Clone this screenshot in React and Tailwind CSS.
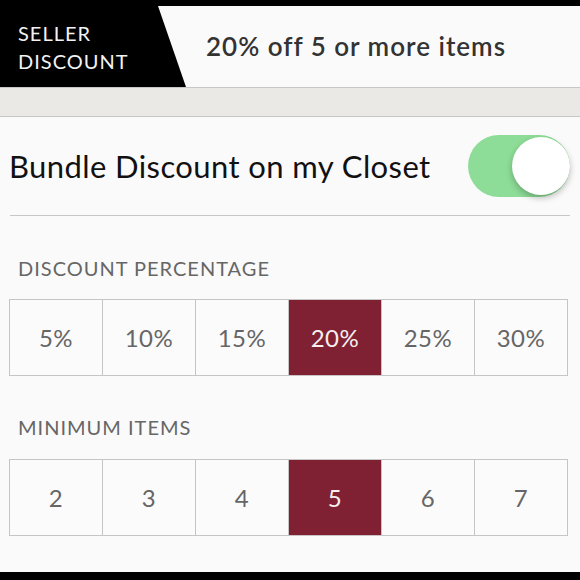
import React from 'react';

const percents = ['5%', '10%', '15%', '20%', '25%', '30%'];
const minimums = ['2', '3', '4', '5', '6', '7'];

function OptionRow({ options, selected }) {
  return (
    <div className="ml-[9px] grid w-[559px] grid-cols-6 gap-px bg-[#c6c4c5] p-px">
      {options.map((opt) => (
        <div
          key={opt}
          className={`flex h-[75px] items-center justify-center text-[24px] tracking-[0.5px] ${
            opt === selected ? 'bg-[#7f2132] text-[#f6eef0]' : 'bg-[#fcfbfc] text-[#666]'
          }`}
        >
          {opt}
        </div>
      ))}
    </div>
  );
}

export default function App() {
  return (
    <div className="flex h-[580px] w-[580px] flex-col bg-[#fbfafb] font-['Lato',sans-serif]">
      {/* Top strip */}
      <div className="h-[6px] bg-black" />

      {/* Header */}
      <div className="flex h-[81px] items-center">
        <div className="flex h-full w-[186px] shrink-0 flex-col justify-center bg-black pl-[18px] text-[20px] leading-[28px] tracking-[1px] text-[#f2f2f2] [clip-path:polygon(0_0,158px_0,186px_100%,0_100%)]">
          <span>SELLER</span>
          <span>DISCOUNT</span>
        </div>
        <div className="pl-[20px] text-[26px] font-semibold tracking-[1px] text-[#333]">20% off 5 or more items</div>
      </div>

      {/* Textured band */}
      <div className="h-[30px] border-y border-[#c9c7c5] bg-[#ebe9e6]" />

      {/* Bundle toggle */}
      <div className="flex h-[98px] items-center justify-between pl-[9px] pr-[10px]">
        <span className="text-[31px] tracking-[0.4px] text-[#111]">Bundle Discount on my Closet</span>
        <div className="flex h-[62px] w-[102px] items-center justify-end rounded-full bg-[#8ddc97]">
          <div className="h-[58px] w-[58px] rounded-full bg-white shadow-[0_3px_6px_rgba(0,0,0,0.25)]" />
        </div>
      </div>
      <div className="mx-[10px] h-px bg-[#c8c6c7]" />

      {/* Discount percentage */}
      <div className="pl-[18px] pt-[41px] pb-[20px] text-[20px] leading-[22px] tracking-[1px] text-[#666]">DISCOUNT PERCENTAGE</div>
      <OptionRow options={percents} selected="20%" />

      {/* Minimum items */}
      <div className="pl-[18px] pt-[40px] pb-[21px] text-[20px] leading-[22px] tracking-[1px] text-[#666]">MINIMUM ITEMS</div>
      <OptionRow options={minimums} selected="5" />

      <div className="flex-1" />
      <div className="h-[8px] bg-black" />
    </div>
  );
}
